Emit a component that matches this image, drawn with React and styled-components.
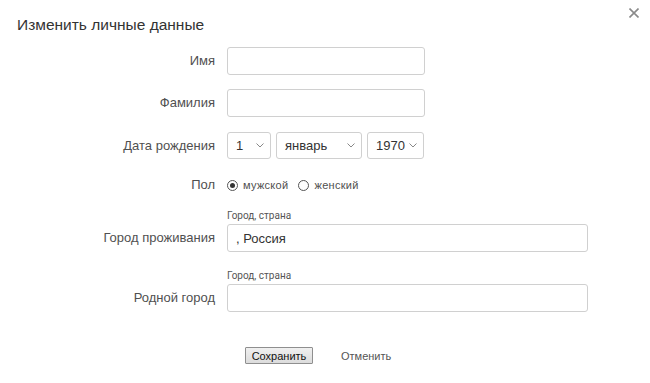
import React, { useState } from 'react'
import styled, { createGlobalStyle } from 'styled-components'

const Global = createGlobalStyle`
    body {
        margin:0;
        background:#fff;
        font-family:"Liberation Sans", Arial, sans-serif;
        color:#333;
    }
`

const Dialog = styled.div`
    width:650px;
    height:383px;
    background:#fff;
    display:flex;
    flex-flow:column nowrap;
`

const Header = styled.div`
    display:flex;
    justify-content:space-between;
    align-items:flex-start;
    padding:0 11px 0 17px;
    height:47px;
`

const Title = styled.h1`
    margin:15px 0 0 0;
    font-size:15.5px;
    line-height:20px;
    font-weight:normal;
    color:#333;
`

const Close = styled.button`
    margin-top:8px;
    padding:0;
    border:none;
    background:none;
    width:10px;
    height:10px;
    cursor:pointer;
    display:flex;
`

const Row = styled.div`
    display:grid;
    grid-template-columns:215px 1fr;
    column-gap:12px;
    align-items:${p => p.$align || 'center'};
    margin-top:${p => p.$top || 0}px;
`

const Label = styled.label`
    text-align:right;
    font-size:13px;
    line-height:${p => p.$lh || 16}px;
    color:#505050;
`

const Field = styled.div`
    display:flex;
    flex-flow:column nowrap;
`

const Hint = styled.div`
    font-family:Roboto, "Liberation Sans", sans-serif;
    font-size:10px;
    line-height:12px;
    color:#555;
    margin-bottom:2px;
`

const Input = styled.input`
    box-sizing:border-box;
    width:${p => p.$w}px;
    height:28px;
    border:1px solid #d0d0d0;
    border-radius:3px;
    padding:0 8px;
    font-family:"Liberation Sans", Arial, sans-serif;
    font-size:13px;
    color:#333;
    outline:none;
`

const Selects = styled.div`
    display:flex;
    gap:5px;
`

const Select = styled.div`
    box-sizing:border-box;
    width:${p => p.$w}px;
    height:27px;
    border:1px solid #d0d0d0;
    border-radius:3px;
    padding:0 6px 0 8px;
    display:flex;
    align-items:center;
    justify-content:space-between;
    font-size:13px;
    color:#333;
`

const Radios = styled.div`
    display:flex;
    align-items:center;
    gap:10px;
`

const RadioLabel = styled.label`
    display:flex;
    align-items:center;
    gap:5px;
    font-size:11px;
    letter-spacing:0.3px;
    color:#505050;
    cursor:pointer;
`

const Circle = styled.span`
    box-sizing:border-box;
    width:11px;
    height:11px;
    border:1px solid #555;
    border-radius:50%;
    display:flex;
    align-items:center;
    justify-content:center;
    &::after {
        content:"";
        width:5px;
        height:5px;
        border-radius:50%;
        background:${p => p.$on ? '#333' : 'transparent'};
    }
`

const Buttons = styled.div`
    display:flex;
    align-items:center;
    gap:28px;
    padding-left:18px;
`

const Save = styled.button`
    height:17px;
    width:68px;
    padding:0;
    border:1px solid #8f8f8f;
    border-radius:1px;
    background:linear-gradient(#f0f0f0, #dcdcdc);
    font-family:"Liberation Sans", Arial, sans-serif;
    font-size:11px;
    color:#111;
`

const Cancel = styled.span`
    font-size:11px;
    color:#555;
    cursor:pointer;
`

function Chevron() {
    return (
        <svg width="8" height="5" viewBox="0 0 8 5">
            <path d="M0.5 0.5 L4 4 L7.5 0.5" fill="none" stroke="#888" strokeWidth="1" />
        </svg>
    )
}

export default function App() {
    const [sex, setSex] = useState('m')

    return (
        <Dialog>
            <Global />
            <Header>
                <Title>Изменить личные данные</Title>
                <Close aria-label="Закрыть">
                    <svg width="10" height="10" viewBox="0 0 10 10">
                        <path d="M0.5 0.5 L9.5 9.5 M9.5 0.5 L0.5 9.5" stroke="#8a8a8a" strokeWidth="1.6" />
                    </svg>
                </Close>
            </Header>

            <Row>
                <Label>Имя</Label>
                <Input $w={198} />
            </Row>
            <Row $top={14}>
                <Label>Фамилия</Label>
                <Input $w={198} />
            </Row>
            <Row $top={15}>
                <Label>Дата рождения</Label>
                <Selects>
                    <Select $w={44}>1<Chevron /></Select>
                    <Select $w={86}>январь<Chevron /></Select>
                    <Select $w={57}>1970<Chevron /></Select>
                </Selects>
            </Row>
            <Row $top={18}>
                <Label>Пол</Label>
                <Radios>
                    <RadioLabel onClick={() => setSex('m')}>
                        <Circle $on={sex === 'm'} />мужской
                    </RadioLabel>
                    <RadioLabel onClick={() => setSex('f')}>
                        <Circle $on={sex === 'f'} />женский
                    </RadioLabel>
                </Radios>
            </Row>
            <Row $top={17} $align="end">
                <Label $lh={28}>Город проживания</Label>
                <Field>
                    <Hint>Город, страна</Hint>
                    <Input $w={361} defaultValue=", Россия" />
                </Field>
            </Row>
            <Row $top={18} $align="end">
                <Label $lh={28}>Родной город</Label>
                <Field>
                    <Hint>Город, страна</Hint>
                    <Input $w={361} />
                </Field>
            </Row>
            <Row $top={35}>
                <span />
                <Buttons>
                    <Save>Сохранить</Save>
                    <Cancel>Отменить</Cancel>
                </Buttons>
            </Row>
        </Dialog>
    )
}
